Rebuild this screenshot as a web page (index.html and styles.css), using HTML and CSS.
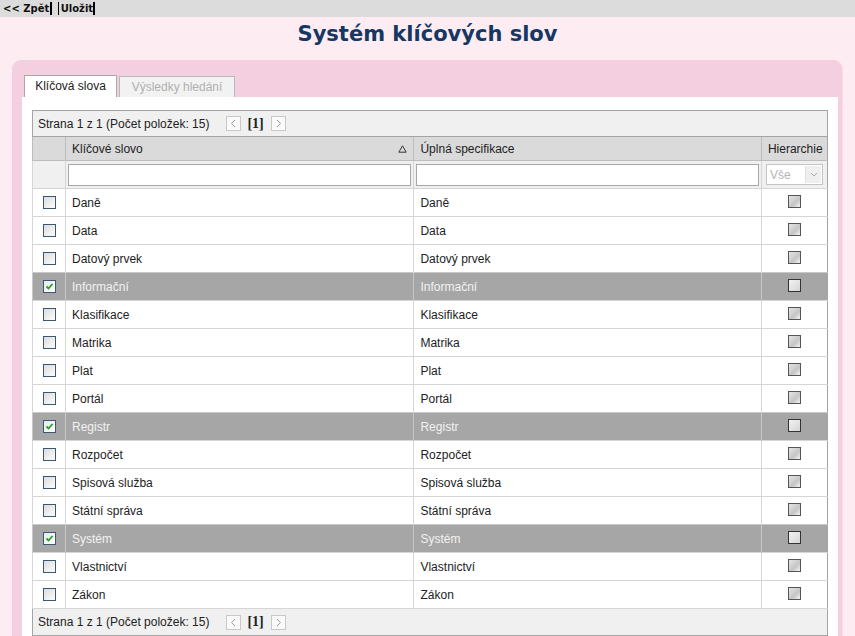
FILE: index.html
```html
<!DOCTYPE html>
<html lang="cs">
<head>
<meta charset="utf-8">
<title>Systém klíčových slov</title>
<link rel="stylesheet" href="styles.css">
</head>
<body>
<div class="topbar"><span class="lnk cur">&lt;&lt; Zpět</span> <span class="lnk sep">Uložit</span></div>
<h1 class="title">Systém klíčových slov</h1>
<div class="panel">
  <div class="tabs">
    <div class="tab active">Klíčová slova</div>
    <div class="tab">Výsledky hledání</div>
  </div>
  <div class="content">
    <table class="grid">
      <colgroup><col class="c0"><col class="c1"><col class="c2"><col class="c3"></colgroup>
      <tr class="pager"><td colspan="4"><div class="pg">Strana 1 z 1 (Počet položek: 15) <span class="pbtn"><svg width="9" height="9" viewBox="0 0 9 9"><path d="M6 1 L2.5 4.5 L6 8" fill="none" stroke="#999" stroke-width="1"/></svg></span><b class="num">[1]</b><span class="pbtn"><svg width="9" height="9" viewBox="0 0 9 9"><path d="M3 1 L6.5 4.5 L3 8" fill="none" stroke="#999" stroke-width="1"/></svg></span></div></td></tr>
      <tr class="head"><td></td><td><div class="hd">Klíčové slovo<svg class="sort" width="9" height="8" viewBox="0 0 9 8"><path d="M4.5 0.8 L8.2 7.2 L0.8 7.2 Z" fill="none" stroke="#333" stroke-width="1"/></svg></div></td><td>Úplná specifikace</td><td>Hierarchie</td></tr>
      <tr class="filter"><td></td><td><div class="inp"></div></td><td><div class="inp"></div></td><td><div class="sel"><span>Vše</span><span class="arr"><svg width="8" height="5" viewBox="0 0 8 5"><path d="M1 1 L4 4 L7 1" fill="none" stroke="#aaa"/></svg></span></div></td></tr>
      <tr><td><span class="cb"></span></td><td>Daně</td><td>Daně</td><td class="hc"><span class="hb"></span></td></tr>
      <tr><td><span class="cb"></span></td><td>Data</td><td>Data</td><td class="hc"><span class="hb"></span></td></tr>
      <tr><td><span class="cb"></span></td><td>Datový prvek</td><td>Datový prvek</td><td class="hc"><span class="hb"></span></td></tr>
      <tr class="sel-row"><td><span class="cb on"><svg width="11" height="11" viewBox="0 0 11 11"><path d="M2.5 5.5 L4.5 7.5 L8.5 3" fill="none" stroke="#21a121" stroke-width="1.8"/></svg></span></td><td>Informační</td><td>Informační</td><td class="hc"><span class="hb"></span></td></tr>
      <tr><td><span class="cb"></span></td><td>Klasifikace</td><td>Klasifikace</td><td class="hc"><span class="hb"></span></td></tr>
      <tr><td><span class="cb"></span></td><td>Matrika</td><td>Matrika</td><td class="hc"><span class="hb"></span></td></tr>
      <tr><td><span class="cb"></span></td><td>Plat</td><td>Plat</td><td class="hc"><span class="hb"></span></td></tr>
      <tr><td><span class="cb"></span></td><td>Portál</td><td>Portál</td><td class="hc"><span class="hb"></span></td></tr>
      <tr class="sel-row"><td><span class="cb on"><svg width="11" height="11" viewBox="0 0 11 11"><path d="M2.5 5.5 L4.5 7.5 L8.5 3" fill="none" stroke="#21a121" stroke-width="1.8"/></svg></span></td><td>Registr</td><td>Registr</td><td class="hc"><span class="hb"></span></td></tr>
      <tr><td><span class="cb"></span></td><td>Rozpočet</td><td>Rozpočet</td><td class="hc"><span class="hb"></span></td></tr>
      <tr><td><span class="cb"></span></td><td>Spisová služba</td><td>Spisová služba</td><td class="hc"><span class="hb"></span></td></tr>
      <tr><td><span class="cb"></span></td><td>Státní správa</td><td>Státní správa</td><td class="hc"><span class="hb"></span></td></tr>
      <tr class="sel-row"><td><span class="cb on"><svg width="11" height="11" viewBox="0 0 11 11"><path d="M2.5 5.5 L4.5 7.5 L8.5 3" fill="none" stroke="#21a121" stroke-width="1.8"/></svg></span></td><td>Systém</td><td>Systém</td><td class="hc"><span class="hb"></span></td></tr>
      <tr><td><span class="cb"></span></td><td>Vlastnictví</td><td>Vlastnictví</td><td class="hc"><span class="hb"></span></td></tr>
      <tr><td><span class="cb"></span></td><td>Zákon</td><td>Zákon</td><td class="hc"><span class="hb"></span></td></tr>
      <tr class="pager foot"><td colspan="4"><div class="pg">Strana 1 z 1 (Počet položek: 15) <span class="pbtn"><svg width="9" height="9" viewBox="0 0 9 9"><path d="M6 1 L2.5 4.5 L6 8" fill="none" stroke="#999" stroke-width="1"/></svg></span><b class="num">[1]</b><span class="pbtn"><svg width="9" height="9" viewBox="0 0 9 9"><path d="M3 1 L6.5 4.5 L3 8" fill="none" stroke="#999" stroke-width="1"/></svg></span></div></td></tr>
    </table>
  </div>
</div>
</body>
</html>
```
FILE: styles.css
```css
html, body { margin: 0; padding: 0; }
body {
  background: #fdedf3;
  font-family: "Liberation Sans", Arial, sans-serif;
  font-size: 12px;
  color: #222;
  overflow: hidden;
  height: 636px;
}
.topbar {
  background: #dcdcdc;
  height: 17px;
  line-height: 17px;
  padding-left: 3px;
  font-family: "DejaVu Sans", sans-serif;
  font-weight: bold;
  font-size: 10px;
  color: #111;
}
.lnk { display: inline-block; line-height: 13px; }
.cur { border-right: 2px solid #000; padding-right: 1px; }
.sep { border-left: 1px solid #000; border-right: 2px solid #000; padding-left: 2px; margin-left: 2px; }
.title {
  margin: 0;
  height: 43px;
  line-height: 35px;
  text-align: center;
  font-family: "DejaVu Sans", sans-serif;
  font-size: 21px;
  font-weight: bold;
  color: #143764;
}
.panel {
  margin-left: 12px;
  width: 816px;
  background: #f3cfdf;
  border-radius: 9px 9px 0 0;
  padding: 15px 4px 0 10px;
  height: 561px;
  box-shadow: 1px 0 0 #f7dde8;
}
.tabs { display: flex; align-items: flex-end; gap: 2px; padding-left: 2px; height: 22px; }
.tab {
  height: 20px;
  line-height: 20px;
  text-align: center;
  border: 1px solid #b8b8b8;
  border-bottom: none;
  background: #f2f2f2;
  color: #b0b0b0;
  width: 114px;
}
.tab.active {
  height: 21px;
  background: #fff;
  color: #222;
  border-color: #a8a8a8;
  width: 91px;
}
.content {
  background: #fff;
  padding: 13px 10px 0 10px;
  height: 526px;
  overflow: hidden;
}
.grid {
  width: 796px;
  border-collapse: collapse;
  table-layout: fixed;
  border: 1px solid #a4a4a4;
}
.c0 { width: 33px; }
.c1 { width: 348px; }
.c2 { width: 347px; }
.c3 { width: 66px; }
.grid td {
  height: 27px;
  padding: 0 0 0 6px;
  border-top: 1px solid #d6d6d6;
  border-left: 1px solid #d6d6d6;
  white-space: nowrap;
  overflow: hidden;
}
.grid tr td:first-child { text-align: center; padding: 0; }
.grid .pager td:first-child { background: #f0f0f0; height: 25px; border-color: #a4a4a4; text-align: left; padding-left: 5px; }
.grid .foot td:first-child { height: 26px; border-top: 1px solid #d6d6d6; }
.pg { display: flex; align-items: center; color: #222; }
.pbtn {
  display: inline-flex;
  align-items: center;
  justify-content: center;
  width: 13px;
  height: 13px;
  border: 1px solid #c8c8c8;
  background: #fafafa;
  margin-left: 17px;
}
.num {
  font-family: "Liberation Serif", serif;
  font-size: 14px;
  margin: 0 7px 0 6px;
  color: #222;
}
.num + .pbtn { margin-left: 0; }
.head td { background: #dadada; height: 23px; border-top: 1px solid #a4a4a4; border-left: 1px solid #bdbdbd; color: #222; }
.hd { display: flex; align-items: center; justify-content: space-between; padding-right: 6px; }
.grid .filter td { background: #f0f0f0; height: 27px; padding: 0 2px; border-top: 1px solid #bdbdbd; }
.inp { height: 20px; border: 1px solid #a8a8a8; background: #fff; }
.sel {
  display: flex;
  align-items: center;
  justify-content: space-between;
  height: 19px;
  margin: 0 2px;
  border: 1px solid #c4c4c4;
  background: #fff;
  color: #b5b5b5;
  padding-left: 3px;
}
.arr {
  display: inline-flex;
  align-items: center;
  justify-content: center;
  width: 15px;
  height: 17px;
  margin-right: 1px;
  background: #efefef;
  border-left: 1px solid #e0e0e0;
}
.cb {
  display: inline-block;
  vertical-align: middle;
  width: 11px;
  height: 11px;
  border: 1px solid #3b5773;
  background: linear-gradient(135deg, #dcdcdc, #fdfdfd);
  margin-top: -1px;
}
.cb.on { background: linear-gradient(135deg, #e8e8e8, #fff); }
.cb svg { display: block; }
.grid td.hc { text-align: center; padding: 0; vertical-align: top; }
.hb {
  display: inline-block;
  width: 11px;
  height: 11px;
  margin-top: 6px;
  border: 1px solid #555;
  background: linear-gradient(135deg, #e6e6e6, #c6c6c6 60%, #f4f4f4);
}
.sel-row td { background: #a6a6a6; color: #f2f2f2; border-top-color: #c8c8c8; border-left-color: #c8c8c8; }
.sel-row .hb { border-color: #333; background: linear-gradient(135deg, #f2f2f2, #d6d6d6); }
```
